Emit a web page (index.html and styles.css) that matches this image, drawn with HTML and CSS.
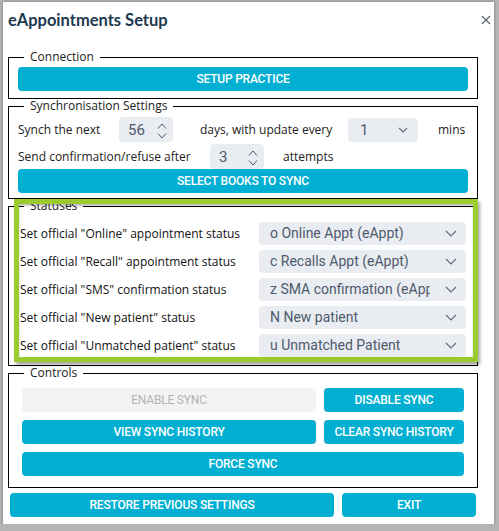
FILE: index.html
```html
<!DOCTYPE html>
<html lang="en">

<head>
    <meta charset="UTF-8">
    <meta name="viewport" content="width=device-width, initial-scale=1.0">
    <title>eAppointments Setup</title>
    <link rel="stylesheet" href="styles.css">
</head>

<body>

    <div class="dialog">
        <div class="header">
            <h1>eAppointments Setup</h1>
            <button class="close-btn" aria-label="Close">
                <svg width="10" height="10" viewBox="0 0 10 10">
                    <path d="M1 1 L9 9 M9 1 L1 9" stroke="#56606b" stroke-width="1.1" fill="none" />
                </svg>
            </button>
        </div>

        <fieldset class="group group-connection">
            <legend>Connection</legend>
            <button class="btn btn-full">Setup Practice</button>
        </fieldset>

        <fieldset class="group group-sync">
            <legend>Synchronisation Settings</legend>
            <div class="sync-row">
                <span class="sync-label label-next">Synch the next</span>
                <div class="num-input">
                    <span class="num-value">56</span>
                    <svg class="spin" width="10" height="20" viewBox="0 0 10 20">
                        <path d="M1 8.5 L5 4 L9 8.5 M1 13.5 L5 18 L9 13.5" stroke="#4b5b70" stroke-width="1" fill="none" />
                    </svg>
                </div>
                <span class="sync-label label-days">days, with update every</span>
                <div class="select select-mins">
                    <span class="select-value">1</span>
                    <svg class="chevron" width="10" height="6" viewBox="0 0 10 6">
                        <path d="M1 1 L5 5 L9 1" stroke="#5f6e7e" stroke-width="1.2" fill="none" />
                    </svg>
                </div>
                <span class="sync-label label-mins">mins</span>
            </div>
            <div class="sync-row">
                <span class="sync-label label-send">Send confirmation/refuse after</span>
                <div class="num-input">
                    <span class="num-value">3</span>
                    <svg class="spin" width="10" height="20" viewBox="0 0 10 20">
                        <path d="M1 8.5 L5 4 L9 8.5 M1 13.5 L5 18 L9 13.5" stroke="#4b5b70" stroke-width="1" fill="none" />
                    </svg>
                </div>
                <span class="sync-label label-attempts">attempts</span>
            </div>
            <button class="btn btn-full">Select books to sync</button>
        </fieldset>

        <div class="statuses-wrap">
            <fieldset class="group group-statuses">
                <legend>Statuses</legend>
                <div class="status-row">
                    <span class="status-label">Set official "Online" appointment status</span>
                    <div class="select select-status">
                        <span class="select-value">o Online Appt (eAppt)</span>
                        <svg class="chevron" width="12" height="7" viewBox="0 0 12 7">
                            <path d="M1 1 L6 6 L11 1" stroke="#5f6e7e" stroke-width="1.2" fill="none" />
                        </svg>
                    </div>
                </div>
                <div class="status-row">
                    <span class="status-label">Set official "Recall" appointment status</span>
                    <div class="select select-status">
                        <span class="select-value">c Recalls Appt (eAppt)</span>
                        <svg class="chevron" width="12" height="7" viewBox="0 0 12 7">
                            <path d="M1 1 L6 6 L11 1" stroke="#5f6e7e" stroke-width="1.2" fill="none" />
                        </svg>
                    </div>
                </div>
                <div class="status-row">
                    <span class="status-label">Set official "SMS" confirmation status</span>
                    <div class="select select-status">
                        <span class="select-value">z SMA confirmation (eAppt)</span>
                        <svg class="chevron" width="12" height="7" viewBox="0 0 12 7">
                            <path d="M1 1 L6 6 L11 1" stroke="#5f6e7e" stroke-width="1.2" fill="none" />
                        </svg>
                    </div>
                </div>
                <div class="status-row">
                    <span class="status-label">Set official "New patient" status</span>
                    <div class="select select-status">
                        <span class="select-value">N New patient</span>
                        <svg class="chevron" width="12" height="7" viewBox="0 0 12 7">
                            <path d="M1 1 L6 6 L11 1" stroke="#5f6e7e" stroke-width="1.2" fill="none" />
                        </svg>
                    </div>
                </div>
                <div class="status-row">
                    <span class="status-label">Set official "Unmatched patient" status</span>
                    <div class="select select-status">
                        <span class="select-value">u Unmatched Patient</span>
                        <svg class="chevron" width="12" height="7" viewBox="0 0 12 7">
                            <path d="M1 1 L6 6 L11 1" stroke="#5f6e7e" stroke-width="1.2" fill="none" />
                        </svg>
                    </div>
                </div>
            </fieldset>
            <!-- highlight frame drawn over the statuses group -->
            <div class="highlight"></div>
        </div>

        <fieldset class="group group-controls">
            <legend>Controls</legend>
            <div class="controls-grid">
                <button class="btn btn-disabled" disabled>Enable sync</button>
                <button class="btn">Disable sync</button>
                <button class="btn">View sync history</button>
                <button class="btn">Clear sync history</button>
                <button class="btn btn-span">Force sync</button>
            </div>
        </fieldset>

        <div class="footer">
            <button class="btn">Restore previous settings</button>
            <button class="btn">Exit</button>
        </div>
    </div>

</body>

</html>
```

FILE: styles.css
```css
body {
    margin: 0;
    background-color: #b4b4b4;
    font-family: 'Open Sans', 'Noto Sans', sans-serif;
}

.dialog {
    box-sizing: border-box;
    width: 491px;
    height: 522px;
    margin: 2px 0 0 3px;
    padding: 0 16px 0 5px;
    background-color: white;
    box-shadow: 0 0 3px rgba(0, 0, 0, 0.35);
}

.header {
    display: flex;
    justify-content: space-between;
    align-items: center;
    height: 48px;
}

h1 {
    margin: 0 0 12px 0;
    font-family: Lato, 'Open Sans', sans-serif;
    font-size: 16.5px;
    font-weight: 700;
    line-height: 20px;
    color: #1d3a50;
}

.close-btn {
    background: none;
    border: none;
    padding: 0;
    margin: 0 -13px 12px 0;
    width: 10px;
    height: 10px;
    line-height: 0;
}

.group {
    margin: 0;
    border: 1px solid #000;
    min-width: 0;
}

.group legend {
    padding: 0 6px;
    font-size: 12px;
    line-height: 14px;
    color: #222;
}

.group-connection {
    padding: 3px 9px 7px 9px;
}

.group-sync {
    padding: 4px 9px 5px 9px;
}

.group-connection legend,
.group-sync legend {
    margin-left: 6px;
}

.group-statuses {
    padding: 6px 11px 6px 11px;
}

.group-statuses legend {
    margin-left: 4px;
}

.group-controls {
    padding: 8px 13px 11px 13px;
}

.group-controls legend {
    margin-left: 2px;
}

/* buttons */

.btn {
    display: block;
    height: 24px;
    padding: 0;
    border: none;
    border-radius: 4px;
    background-color: #00afd1;
    color: white;
    font-family: Roboto, 'Liberation Sans', sans-serif;
    font-size: 12px;
    font-weight: 500;
    letter-spacing: -0.2px;
    text-transform: uppercase;
    cursor: pointer;
}

.btn-full {
    width: 100%;
}

.btn-disabled {
    background-color: #f3f3f3;
    color: #b3b3b3;
    font-weight: 400;
    cursor: default;
}

/* sync settings */

.sync-row {
    display: flex;
    align-items: center;
    height: 25px;
    font-size: 12px;
    color: #222;
}

.sync-row + .sync-row {
    margin-top: 2px;
}

.label-next {
    width: 101px;
}

.label-days {
    margin-left: 27px;
    width: 148px;
}

.label-mins {
    margin-left: 20px;
}

.label-send {
    width: 192px;
}

.label-attempts {
    margin-left: 19px;
}

.num-input {
    display: flex;
    align-items: center;
    justify-content: space-between;
    box-sizing: border-box;
    width: 54px;
    height: 25px;
    padding: 0 6px 0 9px;
    border-radius: 4px;
    background-color: #e9edf2;
}

.num-value,
.select-value {
    font-family: Roboto, 'Liberation Sans', sans-serif;
    color: #4d5a6c;
}

.num-value {
    font-size: 15px;
}

.select {
    display: flex;
    align-items: center;
    justify-content: space-between;
    box-sizing: border-box;
    border-radius: 4px;
    background-color: #e9edf2;
}

.select-mins {
    width: 70px;
    height: 24px;
    padding: 0 10px 0 12px;
}

.select-mins .select-value {
    font-size: 15px;
}

/* statuses */

.statuses-wrap {
    position: relative;
}

.status-row {
    display: flex;
    align-items: center;
    justify-content: space-between;
    height: 28px;
    font-size: 12px;
    color: #111;
}

.select-status {
    width: 207px;
    height: 23px;
    padding: 0 9px 0 11px;
}

.select-status .select-value {
    font-size: 14px;
    white-space: nowrap;
    overflow: hidden;
    width: 160px;
}

.highlight {
    position: absolute;
    top: 0;
    left: 6px;
    right: 0;
    height: 163px;
    box-sizing: border-box;
    border: 5px solid #9ccb2e;
    box-shadow: 2px 3px 3px rgba(0, 0, 0, 0.35), inset 0 2px 2px rgba(0, 0, 0, 0.25);
    pointer-events: none;
}

/* controls */

.controls-grid {
    display: grid;
    grid-template-columns: 1fr 140px;
    gap: 8px;
}

.btn-span {
    grid-column: 1 / 3;
}

.footer {
    display: grid;
    grid-template-columns: 324px 134px;
    gap: 8px;
    margin: 5px 2px 0 2px;
}
```
